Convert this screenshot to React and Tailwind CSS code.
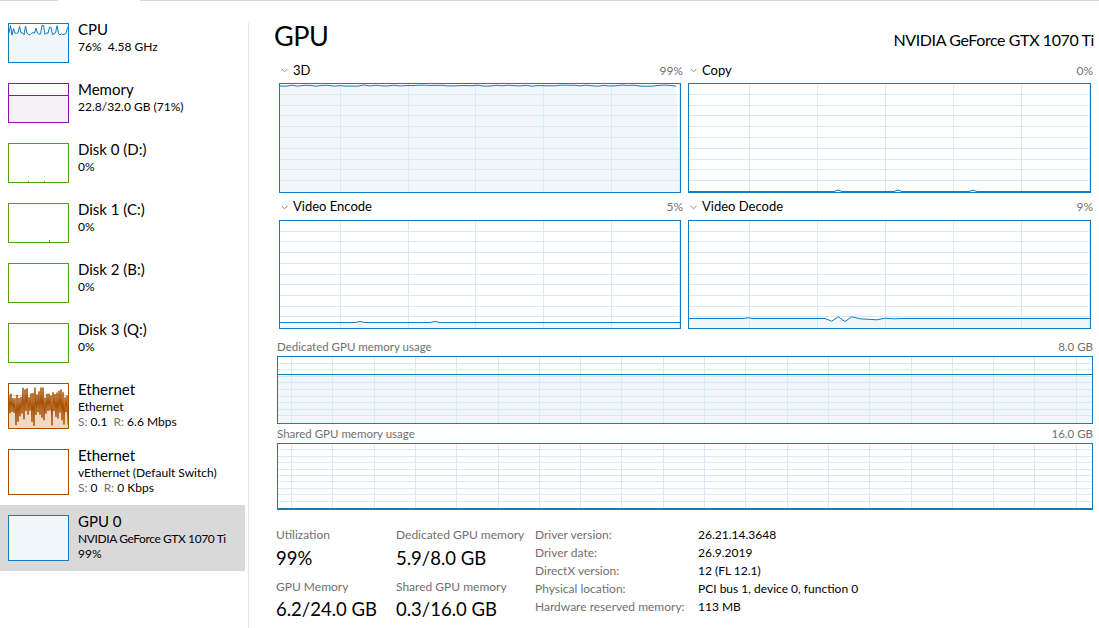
import React from 'react';

const BLUE = '#117dbb';
const GRID = '#d9eaf4';
const FILL = '#f1f6fa';

const rnd = (i) => {
  const x = Math.sin(i * 127.1 + 311.7) * 43758.5453;
  return x - Math.floor(x);
};

// generic task-manager style chart body (inner area only, border is on the wrapper)
function Chart({ w, h, colStart, colStep, rows, line }) {
  const vx = [];
  for (let x = colStart; x < w; x += colStep) vx.push(Math.round(x) + 0.5);
  const hy = [];
  for (let i = 1; i < rows; i++) hy.push(Math.round((h * i) / rows) - 0.5);
  const pts = line ? line.map(([x, y]) => `${x},${y}`).join(' ') : null;
  return (
    <svg width={w} height={h} className="block">
      {line && <polygon points={`0,${h} ${pts} ${w},${h}`} fill={FILL} />}
      {hy.map((y) => <line key={'h' + y} x1="0" x2={w} y1={y} y2={y} stroke={GRID} />)}
      {vx.map((x) => <line key={'v' + x} x1={x} x2={x} y1="0" y2={h} stroke={GRID} />)}
      {line && <polyline points={pts} fill="none" stroke={BLUE} strokeWidth="1" />}
    </svg>
  );
}

const flat = (w, y, bumps = []) => {
  const pts = [[0, y]];
  bumps.forEach(([x, dy, bw]) => {
    pts.push([x - bw, y]);
    pts.push([x, y - dy]);
    pts.push([x + bw, y]);
  });
  pts.push([w, y]);
  return pts;
};

const line3d = (() => {
  const pts = [];
  for (let x = 0; x <= 400; x += 6) pts.push([x, 1 + rnd(x) * 1.2]);
  return pts;
})();

const decodeLine = [
  [0, 97.5], [54, 97.5], [59, 96.8], [64, 97.5], [136, 97.5], [142.7, 100.2], [149.3, 95.8], [156, 100.5],
  [162.7, 95.8], [171, 97.8], [187.7, 98.8], [196, 97.2], [204.3, 97.8], [214, 97.5], [401, 97.5],
];

function Chevron() {
  return (
    <svg width="7" height="5" viewBox="0 0 7 5" className="mr-[5px]">
      <polyline points="0.5,0.8 3.5,3.8 6.5,0.8" fill="none" stroke="#8a8a8a" strokeWidth="1" />
    </svg>
  );
}

function GraphHeader({ label, value, tall }) {
  return (
    <div className={`flex items-center justify-between pl-[2px] -mr-[2px] ${tall ? 'h-[28px] pt-[3px]' : 'h-[27px] pt-[1px]'}`}>
      <div className="flex items-center text-[13px]">
        <Chevron />
        <span>{label}</span>
      </div>
      <span className="text-[12px] text-[#707070]">{value}</span>
    </div>
  );
}

// sidebar thumbnails
function CpuThumb() {
  const pts = [];
  for (let x = 0; x <= 59; x += 1.5) {
    const r = rnd(x * 3 + 1);
    let y = 8.5 + r * 3.5;
    if (r > 0.78) y = 1 + rnd(x + 7) * 4;
    pts.push([x, y]);
  }
  const p = pts.map(([x, y]) => `${x},${y.toFixed(1)}`).join(' ');
  return (
    <div className="w-[61px] h-[40px] border border-[#117dbb] shrink-0">
      <svg width="59" height="38" className="block">
        <polygon points={`0,38 ${p} 59,38`} fill={FILL} />
        <polyline points={p} fill="none" stroke={BLUE} strokeWidth="1" />
      </svg>
    </div>
  );
}

function MemThumb() {
  return (
    <div className="w-[61px] h-[40px] border border-[#8b12ae] shrink-0">
      <svg width="59" height="38" className="block">
        <rect x="0" y="11" width="59" height="27" fill="#f4f2f4" />
        <line x1="0" x2="59" y1="11.5" y2="11.5" stroke="#8b12ae" />
      </svg>
    </div>
  );
}

function DiskThumb({ marks = [] }) {
  return (
    <div className="w-[61px] h-[40px] border border-[#4da60c] shrink-0">
      <svg width="59" height="38" className="block">
        {marks.map(([x, hgt]) => (
          <line key={x} x1={x + 0.5} x2={x + 0.5} y1={38 - hgt} y2="38" stroke="#4da60c" />
        ))}
      </svg>
    </div>
  );
}

function EthThumb({ busy }) {
  const pts = [];
  if (busy) {
    for (let x = 0; x <= 59; x += 1) {
      const top = x % 2 === 0;
      const y = top ? 3 + rnd(x + 3) * 12 : 26 + rnd(x + 11) * 16;
      pts.push([x, y]);
    }
  }
  const p = pts.map(([x, y]) => `${x},${y.toFixed(1)}`).join(' ');
  return (
    <div className="w-[61px] h-[46px] border border-[#a74f01] shrink-0">
      <svg width="59" height="44" className="block">
        {busy && (
          <>
            <polygon points={`0,44 ${p} 59,44`} fill="#edd9c6" />
            <line x1="0" x2="59" y1="11.5" y2="11.5" stroke="#e2c4a8" />
            <polyline points={p} fill="none" stroke="#a74f01" strokeWidth="1" />
          </>
        )}
      </svg>
    </div>
  );
}

function GpuThumb() {
  return <div className="w-[61px] h-[46px] border border-[#117dbb] bg-[#f1f6fa] shrink-0" />;
}

function SideItem({ tall, selected, thumb, title, children }) {
  return (
    <div
      className={`flex items-start pl-[8px] pt-[10px] ${tall ? 'h-[66px]' : 'h-[60px]'} ${
        selected ? 'bg-[#d9d9d9]' : ''
      }`}
    >
      {thumb}
      <div className="ml-[9px] -mt-[3px] whitespace-nowrap">
        <div className="text-[15px] leading-[18px]">{title}</div>
        <div className="text-[12px] leading-[15px] mt-[1px]">{children}</div>
      </div>
    </div>
  );
}

const Gray = ({ children }) => <span className="text-[#707070]">{children}</span>;

function Sidebar() {
  return (
    <div className="w-[245px] pt-[12px] shrink-0">
      <SideItem thumb={<CpuThumb />} title="CPU">
        <div>76%&nbsp; 4.58 GHz</div>
      </SideItem>
      <SideItem thumb={<MemThumb />} title="Memory">
        <div>22.8/32.0 GB (71%)</div>
      </SideItem>
      <SideItem thumb={<DiskThumb marks={[[19, 1], [35, 1]]} />} title="Disk 0 (D:)">
        <div>0%</div>
      </SideItem>
      <SideItem thumb={<DiskThumb marks={[[40, 2]]} />} title="Disk 1 (C:)">
        <div>0%</div>
      </SideItem>
      <SideItem thumb={<DiskThumb />} title="Disk 2 (B:)">
        <div>0%</div>
      </SideItem>
      <SideItem thumb={<DiskThumb />} title="Disk 3 (Q:)">
        <div>0%</div>
      </SideItem>
      <SideItem tall thumb={<EthThumb busy />} title="Ethernet">
        <div>Ethernet</div>
        <div>
          <Gray>S:</Gray> 0.1&nbsp; <Gray>R:</Gray> 6.6 Mbps
        </div>
      </SideItem>
      <SideItem tall thumb={<EthThumb />} title="Ethernet">
        <div>vEthernet (Default Switch)</div>
        <div>
          <Gray>S:</Gray> 0&nbsp; <Gray>R:</Gray> 0 Kbps
        </div>
      </SideItem>
      <SideItem tall selected thumb={<GpuThumb />} title="GPU 0">
        <div className="tracking-[-0.4px]">NVIDIA GeForce GTX 1070 Ti</div>
        <div>99%</div>
      </SideItem>
    </div>
  );
}

const details = [
  ['Driver version:', '26.21.14.3648'],
  ['Driver date:', '26.9.2019'],
  ['DirectX version:', '12 (FL 12.1)'],
  ['Physical location:', 'PCI bus 1, device 0, function 0'],
  ['Hardware reserved memory:', '113 MB'],
];

function Stat({ label, value, first }) {
  return (
    <div className={first ? '' : 'mt-[7px]'}>
      <div className="text-[12px] leading-[18px] text-[#707070]">{label}</div>
      <div className={`text-[18.5px] leading-[26px] ${first ? 'mt-[1px]' : ''}`}>{value}</div>
    </div>
  );
}

function Main() {
  return (
    <div className="flex-1 flex flex-col pl-[25px] pr-[6px]">
      <div className="h-[54px] pt-[18px] flex items-baseline justify-between">
        <span className="text-[27px] leading-[34px] tracking-[-0.5px]">GPU</span>
        <span className="text-[16px] tracking-[-0.4px]">NVIDIA GeForce GTX 1070 Ti</span>
      </div>

      <div className="pl-[5px] pr-[3px] grid grid-cols-[402px_403px] gap-x-[7px]">
        <div>
          <GraphHeader tall label="3D" value="99%" />
          <div className="border border-[#117dbb]">
            <Chart w={400} h={108} colStart={60} colStep={67.7} rows={10} line={line3d} />
          </div>
        </div>
        <div>
          <GraphHeader tall label="Copy" value="0%" />
          <div className="border border-[#117dbb]">
            <Chart
              w={401}
              h={108}
              colStart={60}
              colStep={68}
              rows={10}
              line={flat(401, 107.5, [[149, 1.5, 4], [209, 1.5, 4], [284, 1.5, 4]])}
            />
          </div>
        </div>
        <div>
          <GraphHeader label="Video Encode" value="5%" />
          <div className="border border-[#117dbb]">
            <Chart w={400} h={107} colStart={60} colStep={67.7} rows={10} line={flat(400, 101.5, [[80, 1, 5], [155, 1, 5]])} />
          </div>
        </div>
        <div>
          <GraphHeader label="Video Decode" value="9%" />
          <div className="border border-[#117dbb]">
            <Chart w={401} h={107} colStart={60} colStep={68} rows={10} line={decodeLine} />
          </div>
        </div>
      </div>

      <div className="pl-[3px] pr-[1px]">
        <div className="h-[27px] flex items-end justify-between pb-[2px] text-[11.5px] leading-[14px] text-[#707070]">
          <span>Dedicated GPU memory usage</span>
          <span>8.0 GB</span>
        </div>
        <div className="border border-[#117dbb]">
          <Chart w={814} h={66} colStart={13} colStep={41.3} rows={10} line={[[0, 17.5], [814, 17.5]]} />
        </div>
        <div className="h-[19px] flex items-end justify-between pb-[2px] text-[11.5px] leading-[14px] text-[#707070]">
          <span>Shared GPU memory usage</span>
          <span>16.0 GB</span>
        </div>
        <div className="border border-[#117dbb] border-b-2">
          <Chart w={814} h={64} colStart={13} colStep={41.3} rows={10} />
        </div>
      </div>

      <div className="pl-[2px] pt-[16px] flex">
        <div className="w-[120px]">
          <Stat first label="Utilization" value="99%" />
          <Stat label="GPU Memory" value="6.2/24.0 GB" />
        </div>
        <div className="w-[139px]">
          <Stat first label="Dedicated GPU memory" value="5.9/8.0 GB" />
          <Stat label="Shared GPU memory" value="0.3/16.0 GB" />
        </div>
        <div className="text-[12px] leading-[18px]">
          {details.map(([k, v]) => (
            <div key={k} className="flex">
              <span className="w-[163px] text-[#707070]">{k}</span>
              <span>{v}</span>
            </div>
          ))}
        </div>
      </div>
    </div>
  );
}

export default function App() {
  return (
    <div className="w-[1099px] h-[628px] bg-white overflow-hidden font-[Lato,sans-serif] text-black flex flex-col">
      <div className="flex h-px shrink-0">
        <div className="w-[58px] bg-[#d9d9d9]" />
        <div className="w-[82px]" />
        <div className="flex-1 bg-[#d9d9d9]" />
      </div>
      <div className="flex flex-1">
        <Sidebar />
        <div className="w-[3px] shrink-0" />
        <div className="w-px mt-[22px] bg-[#e5e5e5] shrink-0" />
        <Main />
      </div>
    </div>
  );
}
